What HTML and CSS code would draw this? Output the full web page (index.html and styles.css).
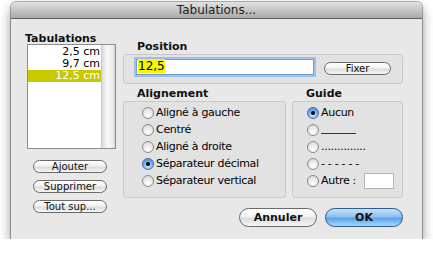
FILE: index.html
```html
<!DOCTYPE html>
<html lang="fr">
<head>
    <meta charset="UTF-8">
    <title>Tabulations...</title>
    <link rel="stylesheet" href="styles.css">
</head>
<body>
    <div class="window">
        <div class="titlebar">Tabulations...</div>
        <div class="content">
            <div class="sidebar">
                <div class="label">Tabulations</div>
                <div class="tablist">
                    <div class="rows">
                        <div class="row">2,5 cm</div>
                        <div class="row">9,7 cm</div>
                        <div class="row selected">12,5 cm</div>
                    </div>
                    <div class="scroll"></div>
                </div>
                <button class="btn small">Ajouter</button>
                <button class="btn small">Supprimer</button>
                <button class="btn small">Tout sup...</button>
            </div>
            <div class="main">
                <div class="label indent">Position</div>
                <div class="group position">
                    <div class="field"><span class="sel">12,5</span></div>
                    <button class="btn small fixer">Fixer</button>
                </div>
                <div class="groups">
                    <div class="col align">
                        <div class="label indent">Alignement</div>
                        <div class="group radios">
                            <div class="radio"><span class="dot"></span>Aligné à gauche</div>
                            <div class="radio"><span class="dot"></span>Centré</div>
                            <div class="radio"><span class="dot"></span>Aligné à droite</div>
                            <div class="radio"><span class="dot on"></span>Séparateur décimal</div>
                            <div class="radio"><span class="dot"></span>Séparateur vertical</div>
                        </div>
                    </div>
                    <div class="col guide">
                        <div class="label indent">Guide</div>
                        <div class="group radios">
                            <div class="radio"><span class="dot on"></span>Aucun</div>
                            <div class="radio"><span class="dot"></span><span class="line"></span></div>
                            <div class="radio"><span class="dot"></span>..............</div>
                            <div class="radio"><span class="dot"></span>- - - - - -</div>
                            <div class="radio"><span class="dot"></span>Autre :<span class="other"></span></div>
                        </div>
                    </div>
                </div>
                <div class="actions">
                    <button class="btn big">Annuler</button>
                    <button class="btn big ok">OK</button>
                </div>
            </div>
        </div>
    </div>
</body>
</html>
```

FILE: styles.css
```css
body {
    margin: 0;
    background-color: #fff;
    font-family: "DejaVu Sans", sans-serif;
    font-size: 11px;
    color: #000;
}
.window {
    margin: 2px 0 0 11px;
    width: 411px;
    height: 237px;
    background-color: #e8e8e8;
    border-radius: 5px 5px 0 0;
    box-shadow: 0 6px 12px rgba(0, 0, 0, 0.45), 0 0 0 1px rgba(0, 0, 0, 0.3);
    overflow: hidden;
}
.titlebar {
    height: 16px;
    line-height: 16px;
    text-align: center;
    font-size: 12px;
    color: #222;
    background: linear-gradient(#e2e2e2, #a9a9a9);
    border-bottom: 1px solid #606060;
}
.content {
    display: flex;
}
.label {
    font-weight: bold;
    line-height: 11px;
    color: #111;
}
.sidebar {
    width: 98px;
    padding: 14px 0 0 14px;
    display: flex;
    flex-direction: column;
}
.tablist {
    margin: 0 0 11px 2px;
    width: 89px;
    height: 105px;
    display: flex;
    background-color: #fff;
    border: 1px solid #8c8c8c;
    box-sizing: border-box;
}
.rows {
    flex: 1;
    padding-top: 1px;
}
.row {
    height: 12px;
    line-height: 12px;
    text-align: right;
    padding-right: 1px;
}
.row.selected {
    background-color: #c9c900;
    color: #fff;
}
.scroll {
    width: 13px;
    background: linear-gradient(90deg, #dadada, #fafafa 40%, #eeeeee 80%, #d4d4d4);
    border-left: 1px solid #cccccc;
}
.btn {
    font-family: "DejaVu Sans", sans-serif;
    color: #111;
    padding: 0;
    border: 1px solid #6a6a6a;
    border-radius: 8px;
    background: linear-gradient(#ffffff, #f2f2f2 45%, #dcdcdc 55%, #f6f6f6);
}
.btn.small {
    width: 74px;
    height: 13px;
    font-size: 10px;
    line-height: 11px;
    margin: 0 0 7px 8px;
}
.main {
    width: 280px;
    padding-top: 22px;
}
.indent {
    padding-left: 14px;
    margin-bottom: 2px;
}
.group {
    background-color: #e2e2e2;
    border: 1px solid #c9c9c9;
    border-radius: 3px;
    box-sizing: border-box;
}
.position {
    height: 30px;
    display: flex;
    align-items: flex-start;
    padding: 4px 0 0 12px;
    margin-bottom: 4px;
}
.field {
    width: 178px;
    height: 16px;
    box-sizing: border-box;
    background-color: #fff;
    border: 1px solid #6f9fd6;
    box-shadow: 0 0 0 2px #9cc0ea;
    font-size: 12px;
    line-height: 13px;
    padding-left: 1px;
}
.sel {
    background-color: #f6f600;
}
.btn.fixer {
    margin: 3px 0 0 10px;
    width: 67px;
}
.groups {
    display: flex;
    gap: 6px;
}
.align {
    width: 163px;
}
.guide {
    width: 111px;
}
.radios {
    height: 97px;
    padding: 2px 0 0 0;
}
.align .radios {
    padding-left: 18px;
}
.guide .radios {
    padding-left: 14px;
}
.radio {
    height: 17px;
    display: flex;
    align-items: center;
    font-size: 11px;
    letter-spacing: -0.3px;
}
.dot {
    width: 12px;
    height: 12px;
    margin-right: 2px;
    box-sizing: border-box;
    border: 1px solid #8a8a8a;
    border-radius: 50%;
    background: radial-gradient(circle at 50% 75%, #ffffff, #e6e6e6 60%, #cfcfcf);
    display: flex;
    align-items: center;
    justify-content: center;
}
.dot.on {
    border-color: #3b6ea8;
    background: radial-gradient(circle at 50% 75%, #cde7ff, #74aee8 55%, #3e82d0);
}
.dot.on::after {
    content: "";
    width: 4px;
    height: 4px;
    border-radius: 50%;
    background-color: #000;
}
.line {
    width: 35px;
    height: 1px;
    margin-top: 8px;
    background-color: #333;
}
.other {
    width: 30px;
    height: 16px;
    margin-left: 8px;
    background-color: #fff;
    border: 1px solid #b4b4b4;
    box-sizing: border-box;
}
.actions {
    display: flex;
    justify-content: flex-end;
    gap: 8px;
    margin-top: 10px;
}
.btn.big {
    width: 78px;
    height: 19px;
    border-radius: 10px;
    font-size: 11px;
    font-weight: bold;
}
.btn.ok {
    border-color: #2b5a95;
    background: linear-gradient(#c7e1fb, #8cc1f0 45%, #5ea3e6 55%, #a6d8ff);
}
```
